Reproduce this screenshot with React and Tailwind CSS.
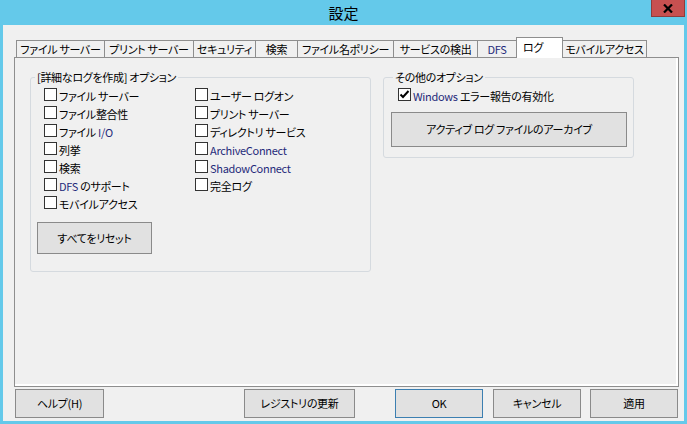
import { useState } from "react";

const font = "[font-family:'Noto_Sans_CJK_JP','Noto_Sans',sans-serif] [font-feature-settings:'palt']";
const txt = "text-[11px] tracking-[-0.3px]";

const tabs = [
  { label: "ファイル サーバー", w: "w-[89px]" },
  { label: "プリント サーバー", w: "w-[90px]" },
  { label: "セキュリティ", w: "w-[63px]" },
  { label: "検索", w: "w-[43px]" },
  { label: "ファイル名ポリシー", w: "w-[97px]" },
  { label: "サービスの検出", w: "w-[85px]" },
  { label: "DFS", w: "w-[40px]", blue: true },
  { label: "ログ", w: "w-[47px]", active: true },
  { label: "モバイルアクセス", w: "w-[85px]" },
];

const leftCol = [
  ["ファイル サーバー"],
  ["ファイル整合性"],
  ["ファイル ", "I/O"],
  ["列挙"],
  ["検索"],
  ["", "DFS", " のサポート"],
  ["モバイルアクセス"],
];

const rightCol = [
  ["ユーザー ログオン"],
  ["プリント サーバー"],
  ["ディレクトリ サービス"],
  ["", "ArchiveConnect"],
  ["", "ShadowConnect"],
  ["完全ログ"],
];

// ascii parts render navy in the original
function Label({ parts }) {
  return (
    <span className={txt + " leading-[18px] text-black whitespace-nowrap"}>
      {parts.map((p, i) =>
        i % 2 === 1 ? (
          <span key={i} className="text-[#1f2a7a]">{p}</span>
        ) : (
          <span key={i}>{p}</span>
        )
      )}
    </span>
  );
}

function Check({ parts, checked, onToggle }) {
  return (
    <div className="h-[18px] flex items-center cursor-default" onClick={onToggle}>
      <div className="w-[13px] h-[13px] border border-[#333] bg-white flex items-center justify-center shrink-0">
        {checked && (
          <svg width="11" height="11" viewBox="0 0 11 11">
            <path d="M1.5 5.5 L4 8 L9.5 2" fill="none" stroke="#000" strokeWidth="2" />
          </svg>
        )}
      </div>
      <div className="ml-[2px]">
        <Label parts={parts} />
      </div>
    </div>
  );
}

function Btn({ children, className = "" }) {
  return (
    <button className={"bg-[#e1e1e1] border border-[#8a8a8a] text-black flex items-center justify-center " + txt + " " + className}>
      {children}
    </button>
  );
}

export default function App() {
  const [checks, setChecks] = useState({ win: true });
  const toggle = (k) => setChecks((c) => ({ ...c, [k]: !c[k] }));

  return (
    <div className={"w-[687px] h-[424px] bg-[#64c9ea] flex flex-col px-[3px] pb-[3px] overflow-hidden " + font}>
      {/* title bar */}
      <div className="h-[25px] flex shrink-0">
        <div className="flex-1" />
        <div className="pt-[3px] text-[15px] leading-[20px] text-black">設定</div>
        <div className="flex-1 flex justify-end items-start">
          <div className="w-[34px] h-[17px] -mr-[1px] bg-[#c75050] border border-[#8e3c3c] border-t-0 flex items-center justify-center">
            <svg width="10" height="9" viewBox="0 0 10 9">
              <path d="M1 0.5 L9 8.5 M9 0.5 L1 8.5" stroke="#000" strokeWidth="2.2" />
            </svg>
          </div>
        </div>
      </div>

      {/* client */}
      <div className="flex-1 bg-[#f0f0f0] flex flex-col pt-[12px] pl-[11px] pr-[5px]">
        {/* tabs */}
        <div className="h-[20px] flex items-end ml-[2px] relative z-10">
          {tabs.map((t, i) =>
            t.active ? (
              <div
                key={i}
                className={t.w + " " + txt + " h-[21px] -mb-px -ml-px bg-white border border-b-0 border-[#8e8e8e] leading-[16px] pl-[6px] pt-[1px] text-black whitespace-nowrap"}
              >
                {t.label}
              </div>
            ) : (
              <div
                key={i}
                className={t.w + " " + txt + " h-[17px] bg-[#f0f0f0] border border-b-0 border-[#8e8e8e] leading-[15px] flex items-center justify-center whitespace-nowrap " + (i > 0 ? "-ml-px " : "") + (t.blue ? "text-[#1f2a7a]" : "text-black")}
              >
                {t.label}
              </div>
            )
          )}
        </div>

        {/* pane */}
        <div className="h-[330px] border border-[#8e8e8e] bg-[#f0f0f0] shadow-[inset_-2px_-2px_0_#fff] flex items-start pt-[11px] pl-[15px] shrink-0">
          <fieldset className="w-[341px] border border-[#d5dadf] rounded-[3px] pl-[4px] pr-0 pb-[17px] pt-0">
            <legend className={txt + " px-[2px] leading-[16px] text-black"}>
              [詳細なログを作成] オプション
            </legend>
            <div className="flex ml-[9px]">
              <div className="w-[151px] flex flex-col">
                {leftCol.map((p, i) => (
                  <Check key={i} parts={p} checked={checks["l" + i]} onToggle={() => toggle("l" + i)} />
                ))}
              </div>
              <div className="flex flex-col">
                {rightCol.map((p, i) => (
                  <Check key={i} parts={p} checked={checks["r" + i]} onToggle={() => toggle("r" + i)} />
                ))}
              </div>
            </div>
            <Btn className="ml-[2px] mt-[11px] w-[115px] h-[32px]">すべてをリセット</Btn>
          </fieldset>

          <fieldset className="ml-[12px] w-[251px] border border-[#d5dadf] rounded-[3px] pl-[7px] pr-[6px] pb-[10px] pt-0">
            <legend className={txt + " ml-[2px] px-[2px] leading-[16px] text-black"}>その他のオプション</legend>
            <div className="ml-[7px]">
              <Check parts={["", "Windows", " エラー報告の有効化"]} checked={checks.win} onToggle={() => toggle("win")} />
            </div>
            <Btn className="mt-[9px] w-[236px] h-[35px]">アクティブ ログ ファイルのアーカイブ</Btn>
          </fieldset>
        </div>

        {/* bottom buttons */}
        <div className="mt-[2px] h-[29px] flex shrink-0">
          <Btn className="ml-[1px] w-[89px] h-[29px]">ヘルプ(H)</Btn>
          <Btn className="ml-[140px] w-[111px] h-[29px]">レジストリの更新</Btn>
          <Btn className="ml-[40px] w-[88px] h-[29px] !border-[#3c7fb1]">OK</Btn>
          <Btn className="ml-[10px] w-[88px] h-[29px]">キャンセル</Btn>
          <Btn className="ml-[9px] w-[88px] h-[29px]">適用</Btn>
        </div>
      </div>
    </div>
  );
}
